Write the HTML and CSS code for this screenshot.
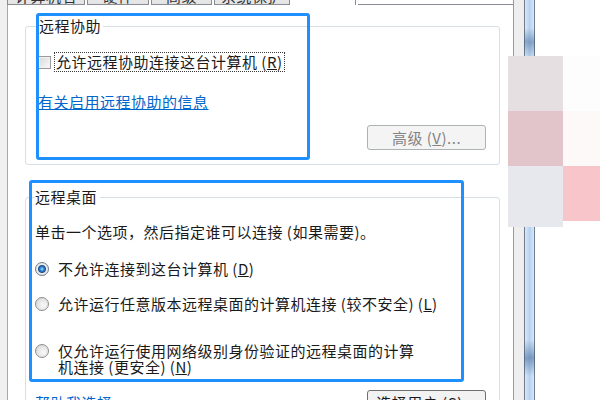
FILE: index.html
```html
<!DOCTYPE html>
<html lang="zh-CN">

<head>
    <meta charset="UTF-8">
    <meta name="viewport" content="width=device-width, initial-scale=1.0">
    <title>系统属性 - 远程</title>
    <link rel="stylesheet" href="styles.css">
</head>

<body>
    <div class="screen">
        <div class="frame-side"></div>

        <div class="panel">
            <div class="tabs">
                <span class="tab tab-1">计算机名</span>
                <span class="tab tab-2">硬件</span>
                <span class="tab tab-3">高级</span>
                <span class="tab tab-4">系统保护</span>
                <span class="tab tab-active">远程</span>
                <span class="tab-fill"></span>
            </div>

            <div class="panel-body">
                <fieldset class="group group-assist">
                    <legend>远程协助</legend>
                    <label class="check-row">
                        <span class="checkbox"></span>
                        <span class="focus-text">允许远程协助连接这台计算机 (<u>R</u>)</span>
                    </label>
                    <a href="#" class="link link-info">有关启用远程协助的信息</a>
                    <div class="btn-row">
                        <button type="button" class="btn" disabled>高级 (<u>V</u>)...</button>
                    </div>
                </fieldset>

                <fieldset class="group group-desktop">
                    <legend>远程桌面</legend>
                    <p class="hint">单击一个选项，然后指定谁可以连接 (如果需要)。</p>
                    <label class="radio-row row-1">
                        <span class="radio checked"></span>
                        <span>不允许连接到这台计算机 (<u>D</u>)</span>
                    </label>
                    <label class="radio-row row-2">
                        <span class="radio"></span>
                        <span>允许运行任意版本远程桌面的计算机连接 (较不安全) (<u>L</u>)</span>
                    </label>
                    <label class="radio-row row-3">
                        <span class="radio"></span>
                        <span class="wrap-text">仅允许运行使用网络级别身份验证的远程桌面的计算机连接 (更安全) (<u>N</u>)</span>
                    </label>
                    <div class="footer-row">
                        <a href="#" class="link">帮助我选择</a>
                        <button type="button" class="btn btn-active">选择用户 (<u>S</u>)...</button>
                    </div>
                </fieldset>

                <!-- highlight frames drawn over the screenshot -->
                <div class="mark mark-assist"></div>
                <div class="mark mark-desktop"></div>
            </div>
        </div>

        <div class="frame-gap"></div>
        <div class="frame-edge"></div>
        <div class="backdrop"></div>

        <!-- pixelated overlay on the right -->
        <div class="mosaic">
            <span class="px px-a"></span>
            <span class="px px-b"></span>
            <span class="px px-c"></span>
            <span class="px px-d"></span>
            <span class="px px-e"></span>
            <span class="px px-f"></span>
        </div>
    </div>
</body>

</html>
```

FILE: styles.css
```css
body {
    margin: 0;
    font-family: "Noto Sans CJK SC", "Liberation Sans", sans-serif;
    font-size: 15px;
    letter-spacing: 0.5px;
    color: #1a1a1a;
    background-color: white;
}

.screen {
    position: relative;
    display: flex;
    width: 600px;
    height: 400px;
    overflow: hidden;
}

/* Window frame pieces */
.frame-side {
    width: 7px;
    flex-shrink: 0;
    background-color: #f0f0f0;
}

.frame-gap {
    width: 10px;
    flex-shrink: 0;
    background-color: #eeeeee;
}

.frame-edge {
    width: 11px;
    flex-shrink: 0;
    background:
        linear-gradient(to bottom, transparent 28px, rgba(50, 90, 140, 0.45) 42px, transparent 58px,
            transparent 340px, rgba(50, 90, 140, 0.5) 358px, transparent 376px),
        linear-gradient(to right, #6f7d8c 0 1px, #dbe8f6 1px, #b7d2ef 50%, #d6e6f7 calc(100% - 1px), #6f7d8c 0);
}

.backdrop {
    flex: 1;
    background-color: white;
}

/* Tab control */
.panel {
    width: 507px;
    flex-shrink: 0;
    display: flex;
    flex-direction: column;
    box-sizing: border-box;
    border-right: 1px solid #9a9a9a;
    background-color: white;
}

.tabs {
    height: 5px;
    flex-shrink: 0;
    display: flex;
    align-items: flex-end;
    overflow: hidden;
}

.tab {
    height: 24px;
    flex-shrink: 0;
    box-sizing: border-box;
    padding-top: 5px;
    line-height: 18px;
    text-align: center;
    color: #333;
    border: 1px solid #898c95;
    background: linear-gradient(#f3f3f3, #e4e4e4);
    margin-right: 2px;
}

.tab-1 {
    width: 78px;
}

.tab-2 {
    width: 62px;
}

.tab-3 {
    width: 61px;
}

.tab-4 {
    width: 76px;
    margin-right: 0;
}

.tab-active {
    width: 66px;
    border-left: none;
    border-bottom: none;
    background: white;
    color: transparent;
}

.tab-fill {
    flex: 1;
    height: 1px;
    background-color: #898c95;
}

.panel-body {
    position: relative;
    flex: 1;
    min-height: 0;
    overflow: hidden;
    border-left: 1px solid #a8a8a8;
}

/* Group boxes */
.group {
    width: 475px;
    min-width: 0;
    box-sizing: border-box;
    margin: 0 0 0 17px;
    border: 1px solid #d5dfe5;
    border-radius: 3px;
}

.group legend {
    line-height: 18px;
}

.group-assist {
    margin-top: 12px;
    padding: 17px 13px 14px 12px;
}

.group-assist legend {
    padding: 0 2px 0 1px;
}

.group-desktop {
    margin-top: 23px;
    padding: 17px 13px 20px 9px;
}

.group-desktop legend {
    padding: 0 3px 0 0;
}

.check-row {
    display: flex;
    align-items: center;
    height: 20px;
}

.checkbox {
    width: 13px;
    height: 13px;
    box-sizing: border-box;
    border: 1px solid #9a9a9a;
    background: linear-gradient(135deg, #d8d8d8, #fafafa);
    box-shadow: inset 0 0 0 1px #f2f2f2;
}

.focus-text {
    margin-left: 3px;
    padding: 0 1px;
    line-height: 18px;
    border: 1px dotted #3a3a3a;
}

.link {
    display: block;
    color: #0066cc;
    line-height: 18px;
    text-decoration: underline;
}

.link-info {
    margin-top: 21px;
}

.btn-row {
    display: flex;
    justify-content: flex-end;
    margin-top: 14px;
}

.btn {
    width: 119px;
    height: 25px;
    padding: 0;
    font: inherit;
    letter-spacing: inherit;
    border-radius: 3px;
    border: 1px solid #adb2b5;
    background-color: #f4f4f4;
    color: #838383;
}

.btn-active {
    border-color: #707070;
    background: linear-gradient(#f2f2f2 50%, #dddddd 50%, #cfcfcf);
    color: #1a1a1a;
}

.hint {
    margin: 0;
    line-height: 18px;
}

.radio-row {
    display: flex;
    align-items: center;
    gap: 9px;
    line-height: 18px;
}

.row-1 {
    margin-top: 19px;
}

.row-2 {
    margin-top: 17px;
}

.row-3 {
    margin-top: 30px;
    align-items: flex-start;
    line-height: 16px;
}

.row-3 .radio {
    margin-top: 1px;
}

.wrap-text {
    max-width: 362px;
}

.radio {
    width: 14px;
    height: 14px;
    flex-shrink: 0;
    box-sizing: border-box;
    border-radius: 50%;
    border: 1px solid #8e8e8e;
    background: radial-gradient(circle at 60% 60%, #f9f9f9 0, #e2e2e2 60%, #c9c9c9 100%);
}

.radio.checked {
    border-color: #6f7c8c;
    background: radial-gradient(circle, #a6dcff 0, #2f86d6 2px, #1b4f8c 3.5px, #eeeeee 4.5px, #cfcfcf 100%);
}

.footer-row {
    display: flex;
    justify-content: space-between;
    align-items: center;
    margin-top: 15px;
}

/* Blue frames over the dialog */
.mark {
    position: absolute;
    box-sizing: border-box;
    border: 3px solid #1e90ff;
    border-radius: 3px;
}

.mark-assist {
    left: 28px;
    top: 8px;
    width: 274px;
    height: 147px;
}

.mark-desktop {
    left: 21px;
    top: 175px;
    width: 435px;
    height: 202px;
}

/* Pixel blocks */
.mosaic {
    position: absolute;
    left: 508px;
    top: 56px;
    display: grid;
    grid-template-columns: 55px 37px;
    grid-template-rows: 55px 55px 61px;
}

.px-a {
    background-color: #e6dfe2;
}

.px-b {
    background-color: #fefdfd;
}

.px-c {
    background-color: #e2c5ca;
}

.px-d {
    background-color: #fdf9f9;
}

.px-e {
    background-color: #e7e8ed;
}

.px-f {
    height: 55px;
    background-color: #f8c5ca;
}
```
